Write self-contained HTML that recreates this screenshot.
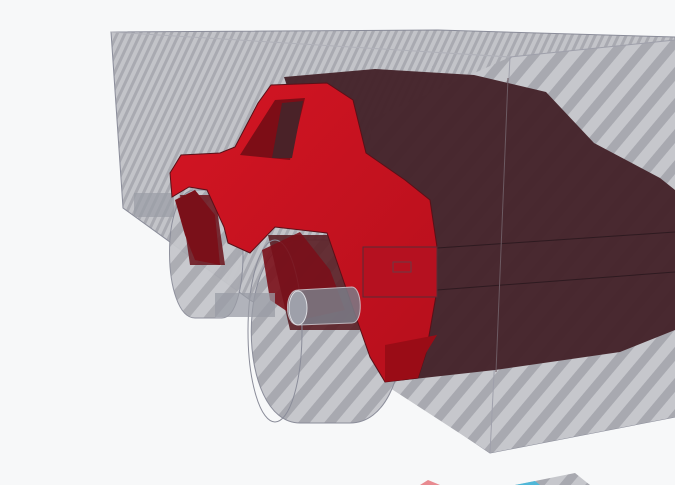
<!DOCTYPE html>
<html><head><style>html,body{margin:0;padding:0;background:#f7f8f9;overflow:hidden}svg{display:block}</style></head>
<body>
<svg width="675" height="485" viewBox="0 0 675 485" xmlns="http://www.w3.org/2000/svg">
<defs>
<pattern id="s1" width="7" height="7" patternUnits="userSpaceOnUse" patternTransform="rotate(25)">
<rect width="7" height="7" fill="#c3c4c9"/><rect width="3" height="7" fill="#a9aab1"/></pattern>
<pattern id="s2" width="20" height="20" patternUnits="userSpaceOnUse" patternTransform="rotate(40)">
<rect width="20" height="20" fill="#c6c7cc"/><rect width="9" height="20" fill="#a8a9b0"/></pattern>
<linearGradient id="red" x1="0" y1="0" x2="1" y2="1"><stop offset="0" stop-color="#d41523"/><stop offset="1" stop-color="#b60f1c"/></linearGradient>
</defs>
<!-- box whole -->
<polygon points="111,32 438,30 675,37 675,417 490,453 400,392 250,300 123,208" fill="url(#s1)" stroke="#8a8c99" stroke-width="1"/>
<!-- right/front face big stripes -->
<polygon points="510,57 675,40 675,417 490,453 390,388 380,300 370,120" fill="url(#s2)"/>
<line x1="510" y1="57" x2="490" y2="453" stroke="#9fa0ab"/>
<line x1="111" y1="32" x2="510" y2="57" stroke="#b0b1b9"/>
<line x1="510" y1="57" x2="675" y2="40" stroke="#9fa0ab"/>
<!-- dark body -->
<polygon points="284,77 375,69 474,75 546,92 594,143 660,178 675,190 675,330 620,352 495,370 387,382" fill="#45242a" opacity="0.97"/>
<line x1="437" y1="248" x2="675" y2="232" stroke="#2e1a20"/>
<line x1="437" y1="290" x2="675" y2="272" stroke="#2e1a20"/>
<line x1="508" y1="78" x2="496" y2="372" stroke="#6c5a62"/>
<!-- wheels -->
<rect x="134" y="193" width="40" height="24" fill="#9a9ca5" opacity="0.7"/>
<path d="M195,190 C160,190 162,318 195,318 L222,318 C250,318 250,190 222,190Z" fill="url(#s2)" stroke="#8a8c99" opacity="0.95"/>
<path d="M180,195 L215,195 L225,265 L190,265Z" fill="#6e1a22" opacity="0.9"/>
<path d="M300,240 C235,240 235,423 300,423 L350,423 C420,423 420,240 350,240Z" fill="url(#s2)" stroke="#8a8c99"/>
<path d="M268,235 L330,235 L360,330 L290,330Z" fill="#5a1e25" opacity="0.9"/>
<ellipse cx="275" cy="331" rx="27" ry="91" fill="none" stroke="#8a8c99"/>
<!-- red car -->
<polygon points="271,85 327,83 353,100 366,153 405,180 430,200 437,247 437,290 426,353 418,378 385,382 370,357 357,320 327,233 301,230 275,227 250,253 228,243 224,227 207,190 189,187 172,197 170,173 181,155 220,153 235,147 258,103" fill="url(#red)" stroke="#5a1018" stroke-width="1"/>
<polygon points="275,100 305,98 290,160 240,155" fill="#7d0d16"/>
<polygon points="282,103 303,101 292,158 272,158" fill="#4a2228"/>
<polygon points="175,200 195,190 215,215 220,265 195,260 185,235" fill="#7a1019"/>
<polygon points="262,250 300,232 330,270 345,310 300,320 270,300" fill="#7a1019" opacity="0.9"/>
<polygon points="385,345 437,335 426,353 418,378 385,382" fill="#9a0c16"/>
<!-- taillight -->
<rect x="363" y="247" width="74" height="50" fill="#b51120" stroke="#5a2a35"/>
<rect x="393" y="262" width="18" height="10" fill="none" stroke="#6a3a45"/>
<!-- exhaust pipes -->
<rect x="215" y="293" width="60" height="24" fill="#9a9ca5" opacity="0.75"/>
<path d="M298,290 L352,287 C362,287 364,323 352,323 L298,325 C284,325 284,290 298,290Z" fill="#7b7d88" opacity="0.85" stroke="#cfd0d6"/>
<ellipse cx="298" cy="308" rx="9" ry="17" fill="#9ea0aa" stroke="#dcdde2"/>
<!-- bottom small items -->
<polygon points="440,485 428,480 420,485" fill="#e88a90"/>
<polygon points="515,485 575,473 590,485" fill="url(#s2)"/>
<polygon points="515,485 535,481 540,485" fill="#4fb7d8"/>
</svg>
</body></html>
